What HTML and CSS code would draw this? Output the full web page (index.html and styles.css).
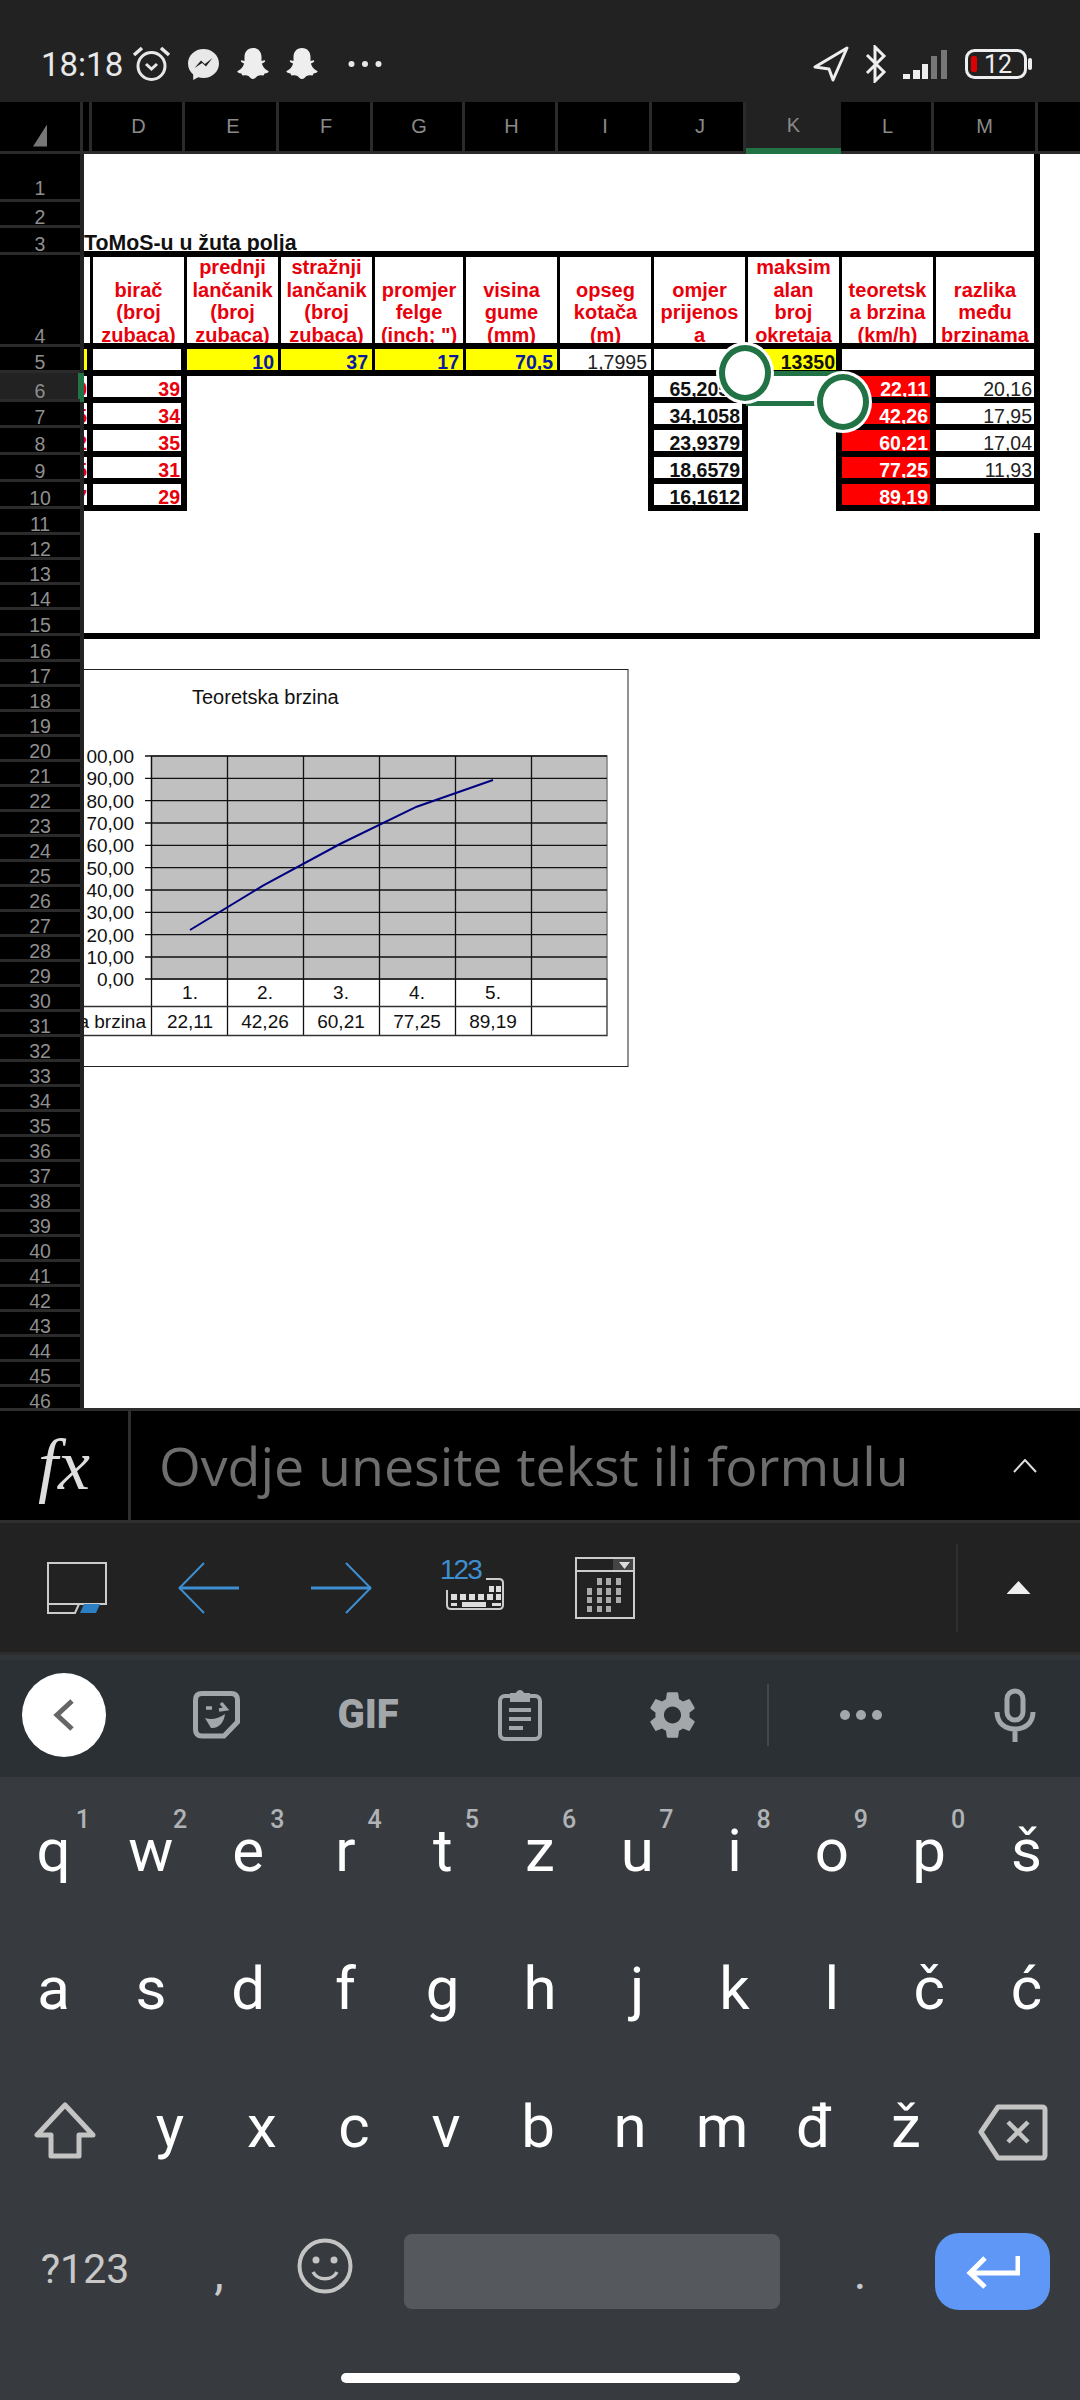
FILE: index.html
```html
<!DOCTYPE html>
<html lang="en">
<head>
  <meta charset="UTF-8">
  <meta name="viewport" content="width=device-width, initial-scale=1.0">
  <title>Excel</title>
  <link rel="stylesheet" href="styles.css">
</head>
<body>
<main class="phone">

  <header class="status">
    <span class="time">18:18</span>
    <svg class="ic-alarm" viewBox="0 0 41 36" fill="none" stroke="#e8e8e8"><circle cx="20.500" cy="20" r="13.500" stroke-width="3"/><path d="M3 9 11 2M38 9 30 2" stroke-width="3.500"/><path d="M15 18l5.500 5 5.500-5" stroke-width="3"/></svg>
    <svg class="ic-msg" viewBox="0 0 31 31"><path fill="#e8e8e8" d="M15.500 0C7 0 0 6.300 0 14.500c0 4.500 2 8.300 5.200 11V31l5-2.700c1.600.500 3.400.700 5.300.700 8.500 0 15.500-6.300 15.500-14.500S24 0 15.500 0z"/><path fill="#222" d="M6.500 19 13 11.500l3.800 3.600L24.500 9 18 17.500l-3.800-3.500z"/></svg>
    <svg class="ic-ghost" viewBox="0 0 34 32"><path fill="#eee" d="M17 0c5.500 0 8.500 4 8.500 9v4l3-.800c1 .300 1 1.500-.500 2.300l-2 1c.500 3 3.500 6.500 6.500 7.500.500 1-1 2-4 2.500-.500 1-.300 2-1.500 2-2-.300-4-.300-5.500.500-1.500 1-2.500 3-4.500 3s-3-2-4.500-3c-1.500-.800-3.500-.800-5.500-.500-1.200 0-1-1-1.500-2-3-.500-4.500-1.500-4-2.500 3-1 6-4.500 6.500-7.500l-2-1c-1.500-.800-1.500-2-.500-2.300l3 .800V9c0-5 3-9 8.500-9z"/></svg>
    <svg class="ic-ghost" viewBox="0 0 34 32"><path fill="#eee" d="M17 0c5.500 0 8.500 4 8.500 9v4l3-.800c1 .300 1 1.500-.500 2.300l-2 1c.500 3 3.500 6.500 6.500 7.500.500 1-1 2-4 2.500-.500 1-.300 2-1.500 2-2-.300-4-.300-5.500.500-1.500 1-2.500 3-4.500 3s-3-2-4.500-3c-1.500-.800-3.500-.800-5.500-.500-1.200 0-1-1-1.500-2-3-.500-4.500-1.500-4-2.500 3-1 6-4.500 6.500-7.500l-2-1c-1.500-.800-1.500-2-.500-2.300l3 .800V9c0-5 3-9 8.500-9z"/></svg>
    <svg class="ic-dots" viewBox="0 0 34 8" fill="#e8e8e8"><circle cx="3.500" cy="4" r="3"/><circle cx="17" cy="4" r="3"/><circle cx="30.500" cy="4" r="3"/></svg>
    <span class="status-right">
      <svg class="ic-nav" viewBox="0 0 36 36" fill="none" stroke="#eee" stroke-width="3" stroke-linejoin="round"><path d="M34 2 2 21l14 2 4 11z"/></svg>
      <svg class="ic-bt" viewBox="0 0 24 38" fill="none" stroke="#eee" stroke-width="3"><path d="M3 10 20 27l-9 9V2l9 9L3 28"/></svg>
      <svg class="ic-signal" viewBox="0 0 45 30"><path fill="#eee" d="M0 25h7v5H0zM10 21h7v9h-7zM19 15h6v15h-6z"/><path fill="#777" d="M28 7h6v23h-6zM38 1h6v29h-6z"/></svg>
      <svg class="ic-batt" viewBox="0 0 67 30"><rect x="1.500" y="1.500" width="59" height="27" rx="8" fill="none" stroke="#eee" stroke-width="3"/><rect x="6" y="7" width="6" height="16" rx="2" fill="#d00"/><text x="19" y="24" class="batt-num">12</text><rect x="63" y="9" width="4" height="12" rx="2" fill="#eee"/></svg>
    </span>
  </header>

  <div class="cols">
    <div class="col c-corner"><span class="tri"></span></div>
    <div class="col c-narrow"></div>
    <div class="col c-d">D</div>
    <div class="col c-e">E</div>
    <div class="col c-f">F</div>
    <div class="col c-g">G</div>
    <div class="col c-h">H</div>
    <div class="col c-i">I</div>
    <div class="col c-j">J</div>
    <div class="col c-k">K</div>
    <div class="col c-l">L</div>
    <div class="col c-m">M</div>
    <div class="col c-rest"></div>
  </div>

  <section class="body">
    <div class="rows">
      <div class="row r48 first">1</div><div class="row r26">2</div><div class="row r27">3</div>
      <div class="row r92">4</div><div class="row r26">5</div><div class="row r29 on">6</div>
      <div class="row r26">7</div><div class="row r27">8</div><div class="row r27">9</div>
      <div class="row r27">10</div><div class="row r26">11</div><div class="row">12</div>
      <div class="row">13</div><div class="row">14</div><div class="row r26">15</div>
      <div class="row r26">16</div><div class="row">17</div><div class="row">18</div>
      <div class="row">19</div><div class="row">20</div><div class="row">21</div>
      <div class="row">22</div><div class="row">23</div><div class="row">24</div>
      <div class="row">25</div><div class="row">26</div><div class="row">27</div>
      <div class="row">28</div><div class="row">29</div><div class="row">30</div>
      <div class="row">31</div><div class="row">32</div><div class="row">33</div>
      <div class="row">34</div><div class="row">35</div><div class="row">36</div>
      <div class="row">37</div><div class="row">38</div><div class="row">39</div>
      <div class="row">40</div><div class="row">41</div><div class="row">42</div>
      <div class="row">43</div><div class="row">44</div><div class="row">45</div>
      <div class="row">46</div>
    </div>

    <div class="sheet">
      <div class="top"><div class="title">ToMoS-u u žuta polja</div></div>

      <div class="grid">
        <div class="hd"></div>
        <div class="hd"><span>birač<br>(broj<br>zubaca)</span></div>
        <div class="hd"><span>prednji<br>lančanik<br>(broj<br>zubaca)</span></div>
        <div class="hd"><span>stražnji<br>lančanik<br>(broj<br>zubaca)</span></div>
        <div class="hd"><span>promjer<br>felge<br>(inch; ")</span></div>
        <div class="hd"><span>visina<br>gume<br>(mm)</span></div>
        <div class="hd"><span>opseg<br>kotača<br>(m)</span></div>
        <div class="hd"><span>omjer<br>prijenos<br>a</span></div>
        <div class="hd"><span>maksim<br>alan<br>broj<br>okretaja</span></div>
        <div class="hd"><span>teoretsk<br>a brzina<br>(km/h)</span></div>
        <div class="hd"><span>razlika<br>među<br>brzinama</span></div>

        <div class="c edge yel"></div>
        <div class="c edge"></div>
        <div class="c yel blue">10</div>
        <div class="c yel blue">37</div>
        <div class="c yel blue">17</div>
        <div class="c yel blue">70,5</div>
        <div class="c plain far">1,7995</div>
        <div class="c"></div>
        <div class="c edge yel tight">13350</div>
        <div class="c wide"></div>

        <div class="c edge red-t cut">0</div>
        <div class="c edge red-t">39</div>
        <div class="fill fill-mid"></div>
        <div class="c edge">65,2051</div>
        <div class="fill fill-k"></div>
        <div class="c edge hot">22,11</div>
        <div class="c plain">20,16</div>

        <div class="c edge red-t cut">5</div>
        <div class="c edge red-t">34</div>
        <div class="c edge">34,1058</div>
        <div class="c edge hot">42,26</div>
        <div class="c plain">17,95</div>

        <div class="c edge red-t cut">2</div>
        <div class="c edge red-t">35</div>
        <div class="c edge">23,9379</div>
        <div class="c edge hot">60,21</div>
        <div class="c plain">17,04</div>

        <div class="c edge red-t cut">5</div>
        <div class="c edge red-t">31</div>
        <div class="c edge">18,6579</div>
        <div class="c edge hot">77,25</div>
        <div class="c plain">11,93</div>

        <div class="c edge red-t cut">7</div>
        <div class="c edge red-t">29</div>
        <div class="c edge">16,1612</div>
        <div class="c edge hot">89,19</div>
        <div class="c"></div>
      </div>

      <div class="frame-low"></div>

      <svg class="chart" viewBox="84 669 545 399">
        <rect x="60" y="669.500" width="568" height="397" fill="#fff" stroke="#222"/>
        <text x="192" y="704" class="t-title">Teoretska brzina</text>
        <rect x="151.500" y="756" width="455.500" height="223" fill="#c0c0c0" stroke="#808080" stroke-width="1.500"/>
        <path fill="none" stroke="#111" stroke-width="1.300" d="M145 756H607M145 778.300H607M145 800.700H607M145 823H607M145 845.300H607M145 867.700H607M145 890H607M145 912.300H607M145 934.700H607M145 957H607M145 979H607M151.500 756V1035M227.500 756V1035M303.500 756V1035M379.500 756V1035M455.500 756V1035M531.500 756V1035"/>
        <path fill="none" stroke="#333" stroke-width="1.300" d="M607 979V1035.500H60M60 1006.500H607"/>
        <polyline fill="none" stroke="#000080" stroke-width="2" points="190,930 263,885.700 340,844 416.700,806.700 493,780"/>
        <g class="t-axis">
          <text x="134" y="763"><tspan class="hide">1</tspan>00,00</text><text x="134" y="785">90,00</text><text x="134" y="807.500">80,00</text>
          <text x="134" y="830">70,00</text><text x="134" y="852">60,00</text><text x="134" y="874.500">50,00</text>
          <text x="134" y="897">40,00</text><text x="134" y="919">30,00</text><text x="134" y="941.500">20,00</text>
          <text x="134" y="964">10,00</text><text x="134" y="986">0,00</text>
          <text x="146" y="1028">Teoretska brzina</text>
        </g>
        <g class="t-cat">
          <text x="190" y="999">1.</text><text x="265" y="999">2.</text><text x="341" y="999">3.</text><text x="417" y="999">4.</text><text x="493" y="999">5.</text>
          <text x="190" y="1028">22,11</text><text x="265" y="1028">42,26</text><text x="341" y="1028">60,21</text><text x="417" y="1028">77,25</text><text x="493" y="1028">89,19</text>
        </g>
      </svg>

      <div class="sel"></div>
      <div class="grip grip-a"></div>
      <div class="grip grip-b"></div>
    </div>
  </section>

  <div class="fx">
    <div class="fx-btn">fx</div>
    <div class="fx-input">Ovdje unesite tekst ili formulu</div>
    <svg class="fx-up" viewBox="0 0 24 14" fill="none" stroke="#ddd" stroke-width="2"><path d="M1 13 12 1l11 12"/></svg>
  </div>

  <div class="tools">
    <div class="tool">
      <svg width="60" height="52" viewBox="0 0 60 52" fill="none"><rect x="1" y="1" width="58" height="41" stroke="#ccc" stroke-width="2"/><path d="M1 42v9h27l4-9" stroke="#ccc" stroke-width="2"/><path d="M33 51h16l4-9H37z" fill="#2d7fc4"/></svg>
    </div>
    <div class="tool">
      <svg width="62" height="52" viewBox="0 0 62 52" fill="none" stroke="#3d8fd1"><path d="M1 26h60" stroke-width="3"/><path d="M26 1 1.500 26 26 51" stroke-width="2"/></svg>
    </div>
    <div class="tool">
      <svg width="62" height="52" viewBox="0 0 62 52" fill="none" stroke="#3d8fd1"><path d="M1 26h60" stroke-width="3"/><path d="M36 1l24.500 25L36 51" stroke-width="2"/></svg>
    </div>
    <div class="tool">
      <div class="kb123">
        <span class="n123">123</span>
        <svg width="58" height="32" viewBox="0 0 58 32" fill="#ddd"><path fill="none" stroke="#ccc" stroke-width="2" d="M40 1h13q4 0 4 4v22q0 4-4 4H5q-4 0-4-4V12"/><path d="M43 8h5v6h-5zM50 8h5v6h-5zM5 16h6v6H5zM14 16h6v6h-6zM23 16h6v6h-6zM32 16h6v6h-6zM41 16h6v6h-6zM50 16h5v6h-5zM5 25h6v3H5zM16 24h24v5H16zM46 25h9v3h-9z"/></svg>
      </div>
    </div>
    <div class="tool">
      <svg width="60" height="62" viewBox="0 0 60 62" fill="none"><rect x="1" y="1" width="58" height="60" stroke="#ccc" stroke-width="2"/><path d="M1 14h58" stroke="#ccc" stroke-width="2"/><path d="M38 1h21v13H38z" fill="#ccc" opacity=".2"/><path d="M44 5h11l-5.500 7z" fill="#ddd"/><path fill="#aaa" d="M22 21h5v7h-5zM31 21h5v7h-5zM41 21h5v7h-5zM12 31h5v7h-5zM22 31h5v7h-5zM31 31h5v7h-5zM41 31h5v7h-5zM12 40h5v6h-5zM22 40h5v6h-5zM31 40h5v6h-5zM41 40h5v6h-5zM12 49h5v6h-5zM22 49h5v6h-5zM31 49h5v6h-5z"/></svg>
    </div>
    <div class="tool-div"></div>
    <div class="tool-more"><span class="up-tri"></span></div>
  </div>

  <div class="sugg">
    <div class="back">
      <svg width="22" height="32" viewBox="0 0 22 32" fill="none" stroke="#666" stroke-width="5"><path d="M19 2 4 16l15 14"/></svg>
    </div>
    <div class="s-slot">
      <svg width="47" height="48" viewBox="0 0 47 48" fill="none" stroke="#a3a7aa" stroke-width="5"><path d="M31 45H9q-6.500 0-6.500-6.500V9Q2.500 2.500 9 2.500h29Q44.500 2.500 44.500 9v22L31 45z"/><path d="M13 17h6M28 12l5 6-7 1" stroke-width="3.500"/><path d="M12 27c6 2 13 1 20-4-1 9-7 15-14 14" stroke-width="0" fill="#a3a7aa"/></svg>
    </div>
    <div class="s-slot gif">GIF</div>
    <div class="s-slot">
      <svg width="44" height="52" viewBox="0 0 44 52" fill="none" stroke="#a3a7aa" stroke-width="4"><rect x="2" y="7" width="40" height="43" rx="5"/><path d="M14 11V6h5q3-6 6 0h5v5z" fill="#a3a7aa"/><path d="M11 21h22M11 30h22M11 39h14" stroke-width="4"/></svg>
    </div>
    <div class="s-slot">
      <svg width="57" height="58" viewBox="0 0 24 24" fill="#a3a7aa"><path d="M19.140 12.940c.04-.3.06-.61.06-.94 0-.32-.02-.64-.07-.94l2.030-1.580c.18-.14.23-.41.12-.61l-1.920-3.320c-.12-.22-.37-.29-.59-.22l-2.390.96c-.5-.38-1.030-.7-1.620-.94l-.36-2.540c-.04-.24-.24-.41-.48-.41h-3.840c-.24 0-.43.17-.47.41l-.36 2.540c-.59.24-1.130.57-1.620.94l-2.390-.96c-.22-.08-.47 0-.59.22L2.740 8.870c-.12.21-.08.47.12.61l2.030 1.580c-.05.3-.09.63-.09.94s.02.64.07.94l-2.030 1.580c-.18.14-.23.41-.12.61l1.920 3.320c.12.22.37.29.59.22l2.390-.96c.5.38 1.030.7 1.620.94l.36 2.540c.05.24.24.41.48.41h3.840c.24 0 .44-.17.47-.41l.36-2.540c.59-.24 1.130-.56 1.620-.94l2.390.96c.22.08.47 0 .59-.22l1.920-3.320c.12-.22.07-.47-.12-.61l-2.010-1.580zM12 15.600c-1.980 0-3.600-1.620-3.600-3.600s1.620-3.600 3.600-3.600 3.600 1.620 3.600 3.600-1.620 3.600-3.600 3.600z"/></svg>
    </div>
    <div class="s-div"></div>
    <div class="s-slot s-dots"><i></i><i></i><i></i></div>
    <div class="s-slot s-mic">
      <svg width="42" height="54" viewBox="0 0 42 54" fill="none" stroke="#a3a7aa" stroke-width="5"><rect x="13" y="3" width="16" height="29" rx="8"/><path d="M3 24c0 11 8 17 18 17s18-6 18-17M21 41v13"/></svg>
    </div>
  </div>

  <div class="kbd">
    <div class="krow k11">
      <div class="key">q<sup>1</sup></div><div class="key">w<sup>2</sup></div><div class="key">e<sup>3</sup></div>
      <div class="key">r<sup>4</sup></div><div class="key">t<sup>5</sup></div><div class="key">z<sup>6</sup></div>
      <div class="key">u<sup>7</sup></div><div class="key">i<sup>8</sup></div><div class="key">o<sup>9</sup></div>
      <div class="key">p<sup>0</sup></div><div class="key">š</div>
    </div>
    <div class="krow k11">
      <div class="key">a</div><div class="key">s</div><div class="key">d</div><div class="key">f</div>
      <div class="key">g</div><div class="key">h</div><div class="key">j</div><div class="key">k</div>
      <div class="key">l</div><div class="key">č</div><div class="key">ć</div>
    </div>
    <div class="krow k3">
      <div class="key">
        <svg class="ic-shift" width="62" height="59" viewBox="0 0 62 59" fill="none" stroke="#c4c4c4" stroke-width="5" stroke-linejoin="round"><path d="M31 4 3 34h14v21h28V34h14z"/></svg>
      </div>
      <div class="key">y</div><div class="key">x</div><div class="key">c</div><div class="key">v</div>
      <div class="key">b</div><div class="key">n</div><div class="key">m</div><div class="key">đ</div><div class="key">ž</div>
      <div class="key">
        <svg class="ic-del" width="70" height="57" viewBox="0 0 70 57" fill="none" stroke="#c4c4c4" stroke-width="5" stroke-linejoin="round"><path d="M20 3h44q3 0 3 3v45q0 3-3 3H20L3 28z"/><path d="M30 18l20 20M50 18 30 38" stroke-width="4.500"/></svg>
      </div>
    </div>
    <div class="krow k4">
      <div class="key small sym">?123</div>
      <div class="key small punct">,</div>
      <div class="key emoji">
        <svg width="56" height="56" viewBox="0 0 56 56" fill="none" stroke="#c4c4c4" stroke-width="4"><circle cx="28" cy="28" r="25.500"/><circle cx="19" cy="22" r="3.500" fill="#c4c4c4" stroke="none"/><circle cx="37" cy="22" r="3.500" fill="#c4c4c4" stroke="none"/><path d="M16 34c5 9 19 9 24 0" stroke-width="3.500"/></svg>
      </div>
      <div class="space"></div>
      <div class="key small punct dot">.</div>
      <div class="enter">
        <svg width="54" height="34" viewBox="0 0 54 34" fill="none" stroke="#fff" stroke-width="5"><path d="M52 1v17H5M19 3 4 18l15 14"/></svg>
      </div>
    </div>
    <div class="home"></div>
  </div>

</main>
</body>
</html>
```

FILE: styles.css
```css
* {
  box-sizing: border-box;
}
body {
  margin: 0;
  background-color: #000;
  font-family: "Liberation Sans", Arial, sans-serif;
}
.phone {
  width: 1080px;
  height: 2400px;
  display: flex;
  flex-direction: column;
  overflow: hidden;
}
svg {
  display: block;
  flex: none;
}

/* status bar */
.status {
  height: 102px;
  flex: none;
  background-color: #222;
  display: flex;
  align-items: center;
  padding: 26px 48px 0 41px;
  color: #e8e8e8;
}
.time {
  font: 33px/1 Roboto, sans-serif;
  width: 90px;
}
.ic-alarm { width: 41px; height: 36px; }
.ic-msg { width: 31px; height: 31px; margin-left: 16px; }
.ic-ghost { width: 34px; height: 32px; margin-left: 17px; }
.ic-ghost + .ic-ghost { margin-left: 15px; }
.ic-dots { width: 34px; height: 8px; margin-left: 29px; }
.status-right {
  margin-left: auto;
  display: flex;
  align-items: center;
}
.ic-nav { width: 36px; height: 36px; }
.ic-bt { width: 24px; height: 38px; margin-left: 15px; }
.ic-signal { width: 45px; height: 30px; margin-left: 15px; }
.ic-batt { width: 67px; height: 30px; margin-left: 17px; }
.batt-num {
  font: 25px Roboto, sans-serif;
  fill: #eee;
}

/* column letters */
.cols {
  height: 52px;
  flex: none;
  display: flex;
  background-color: #000;
  border-bottom: 3px solid #2b2b2b;
}
.col {
  border-right: 3px solid #2b2b2b;
  color: #8a8a8a;
  font-size: 20px;
  padding-left: 3px;
  display: flex;
  align-items: center;
  justify-content: center;
}
.c-corner { width: 83px; position: relative; padding-left: 0; }
.c-narrow { width: 9px; }
.c-d { width: 93px; }
.c-e { width: 94px; padding-left: 5px; }
.c-f { width: 94px; }
.c-g { width: 92px; }
.c-h { width: 93px; }
.c-i { width: 94px; }
.c-j { width: 94px; padding-left: 5px; }
.c-k {
  width: 95px;
  height: 52px;
  background-color: #222;
  border-bottom: 6px solid #217346;
  border-right: 0;
  padding-left: 0;
}
.c-l { width: 93px; }
.c-m { width: 104px; padding-left: 0; }
.c-rest { width: 42px; border-right: 0; }
.tri {
  width: 14px;
  height: 22px;
  margin-top: 18px;
  background-color: #777;
  clip-path: polygon(100% 0, 100% 100%, 0 100%);
}

/* sheet */
.body {
  height: 1254px;
  flex: none;
  display: flex;
  overflow: hidden;
}
.rows {
  width: 84px;
  flex: none;
  background-color: #222;
  padding-right: 4px;
}
.row {
  height: 25px;
  background-color: #000;
  border-bottom: 3px solid #2b2b2b;
  color: #8f8f8f;
  font-size: 19.500px;
  line-height: 16px;
  display: flex;
  align-items: flex-end;
  justify-content: center;
}
.r26 { height: 26px; }
.r27 { height: 27px; }
.r29 { height: 29px; }
.r48 { height: 48px; }
.r92 { height: 92px; }
.first { padding-bottom: 3px; }
.row.on {
  background-color: #222;
  box-shadow: 4px 0 0 #217346, inset -2px 0 0 #217346;
}
.sheet {
  position: relative;
  width: 996px;
  background-color: #fff;
  overflow: hidden;
}
.top {
  width: 956px;
  height: 97px;
  border-right: 6px solid #000;
  display: flex;
  align-items: flex-end;
  overflow: hidden;
}
.title {
  font-size: 21.300px;
  font-weight: bold;
  line-height: 24px;
  margin-bottom: -4px;
  color: #111;
}
.grid {
  width: 956px;
  background-color: #000;
  padding: 6px 6px 6px 0;
  display: grid;
  grid-template-columns: 6px 91px 91px 91px 88px 91px 91px 91px 91px 91px 98px;
  grid-template-rows: 86px repeat(6, 21px);
  column-gap: 3px;
  row-gap: 6px;
}
.hd {
  background-color: #fff;
  color: #e8000b;
  font-size: 20px;
  font-weight: bold;
  line-height: 22.500px;
  text-align: center;
  display: flex;
  flex-direction: column;
  justify-content: flex-end;
  overflow: hidden;
}
.hd span {
  margin-bottom: -3px;
}
.c {
  background-color: #fff;
  font-size: 19.500px;
  line-height: 27px;
  font-weight: bold;
  color: #111;
  display: flex;
  justify-content: flex-end;
  padding-right: 2px;
  overflow: hidden;
}
.edge { border-right: 3px solid #000; }
.yel { background-color: #ff0; }
.blue { color: #0b1aa0; padding-right: 4px; }
.plain { font-weight: normal; color: #222; }
.far { padding-right: 4px; }
.tight { padding-right: 1px; }
.red-t { color: #e8000b; padding-right: 1px; }
.cut { padding-right: 0; }
.hot {
  background-color: #f00;
  background-clip: padding-box;
  color: #fff;
}
.wide { grid-column: span 2; }
.fill {
  background-color: #fff;
  margin-bottom: -6px;
  margin-right: 3px;
}
.fill-mid { grid-column: span 5; grid-row: span 5; }
.fill-k { grid-row: span 5; }
.frame-low {
  width: 956px;
  height: 106px;
  margin-top: 22px;
  border-right: 6px solid #000;
  border-bottom: 6px solid #000;
}
.chart {
  width: 545px;
  height: 399px;
  margin-top: 30px;
}
.t-title {
  font-size: 20px;
  fill: #111;
}
.t-axis text {
  font-size: 19px;
  text-anchor: end;
  fill: #111;
}
.t-axis .hide {
  fill: transparent;
}
.t-cat text {
  font-size: 19px;
  text-anchor: middle;
  fill: #111;
}

/* selection over K6 */
.sel {
  position: absolute;
  left: 662px;
  top: 217px;
  width: 98px;
  height: 35px;
  border: 5px solid #217346;
}
.grip {
  position: absolute;
  width: 52px;
  height: 56px;
  border-radius: 50%;
  background-color: #fff;
  border: 6px solid #217346;
  box-shadow: 0 0 0 3px #fff;
}
.grip-a { left: 635px; top: 191px; }
.grip-b { left: 733px; top: 220px; }

/* formula bar */
.fx {
  height: 115px;
  flex: none;
  background-color: #000;
  border-top: 3px solid #2e2e2e;
  border-bottom: 3px solid #2e2e2e;
  display: flex;
  align-items: center;
}
.fx-btn {
  width: 131px;
  height: 100%;
  border-right: 3px solid #2e2e2e;
  color: #ddd;
  font: italic 72px "Liberation Serif", serif;
  display: flex;
  align-items: center;
  justify-content: center;
}
.fx-input {
  margin-left: 28px;
  width: 848px;
  color: #6e6e6e;
  font: 53.700px "Open Sans", sans-serif;
}
.fx-up {
  width: 24px;
  height: 14px;
  margin-left: 6px;
}

/* excel toolbar */
.tools {
  height: 132px;
  flex: none;
  background-color: #222;
  border-bottom: 3px solid #2d2d2d;
  padding-left: 11px;
  display: flex;
  align-items: center;
}
.tool {
  width: 132px;
  display: flex;
  justify-content: center;
}
.kb123 {
  position: relative;
  width: 62px;
  height: 44px;
  display: flex;
  align-items: flex-end;
  justify-content: flex-end;
}
.n123 {
  position: absolute;
  left: -2px;
  top: -12px;
  color: #3d8fd1;
  font: 28px "Liberation Sans", sans-serif;
  letter-spacing: -2px;
}
.tool-div {
  margin-left: auto;
  width: 2px;
  height: 88px;
  background-color: #2e2e2e;
}
.tool-more {
  width: 122px;
  display: flex;
  justify-content: center;
}
.up-tri {
  width: 24px;
  height: 13px;
  margin-right: 1px;
  background-color: #eee;
  clip-path: polygon(50% 0, 100% 100%, 0 100%);
}

/* gboard suggestion strip */
.sugg {
  height: 122px;
  flex: none;
  background-color: #2b3035;
  border-top: 5px solid #30353a;
  padding: 0 0 8px 22px;
  display: flex;
  align-items: center;
}
.back {
  width: 84px;
  height: 84px;
  border-radius: 50%;
  background-color: #fff;
  margin-right: 34px;
  display: flex;
  align-items: center;
  justify-content: center;
}
.s-slot {
  width: 152px;
  display: flex;
  align-items: center;
  justify-content: center;
}
.gif {
  color: #a3a7aa;
  font: 900 40px Roboto, sans-serif;
}
.s-div {
  width: 2px;
  height: 62px;
  background-color: #42474c;
  margin: 0 16px 0 19px;
}
.s-dots {
  gap: 6px;
}
.s-dots i {
  width: 10px;
  height: 10px;
  border-radius: 50%;
  background-color: #a3a7aa;
}
.s-mic {
  width: 122px;
  margin-left: 17px;
}

/* keyboard */
.kbd {
  flex: 1;
  background-color: #373b3f;
  padding-top: 5px;
}
.krow {
  height: 138px;
  display: grid;
}
.k11 {
  padding: 0 5px;
  grid-template-columns: repeat(11, 1fr);
}
.k3 {
  grid-template-columns: 124px repeat(9, 92px) 128px;
}
.k4 {
  height: 151px;
  grid-template-columns: 170px 98px 136px 376px 155px 115px;
  align-items: center;
}
.key {
  position: relative;
  color: #fff;
  font: 60px/138px Roboto, sans-serif;
  text-align: center;
}
.key sup {
  position: absolute;
  left: 50%;
  margin-left: 22px;
  top: 25px;
  color: #b0b3b6;
  font: 500 25px/26px Roboto, sans-serif;
}
.ic-shift { margin: 43px 0 0 34px; }
.ic-del { margin: 46px 0 0 26px; }
.key.small {
  line-height: 60px;
  color: #c8c8c8;
}
.key.sym {
  font-size: 41px;
  position: relative;
  top: -3px;
}
.key.punct {
  font-size: 48px;
  position: relative;
  top: 1px;
}
.dot { padding-left: 5px; }
.emoji {
  display: flex;
  justify-content: flex-end;
  padding-right: 51px;
  margin-top: -12px;
}
.space {
  height: 75px;
  background-color: #55585d;
  border-radius: 8px;
}
.enter {
  height: 77px;
  background-color: #5e97f6;
  border-radius: 24px;
  display: flex;
  align-items: center;
  justify-content: center;
}
.home {
  width: 399px;
  height: 10px;
  margin: 26px auto 0;
  border-radius: 5px;
  background-color: #fff;
}
```
